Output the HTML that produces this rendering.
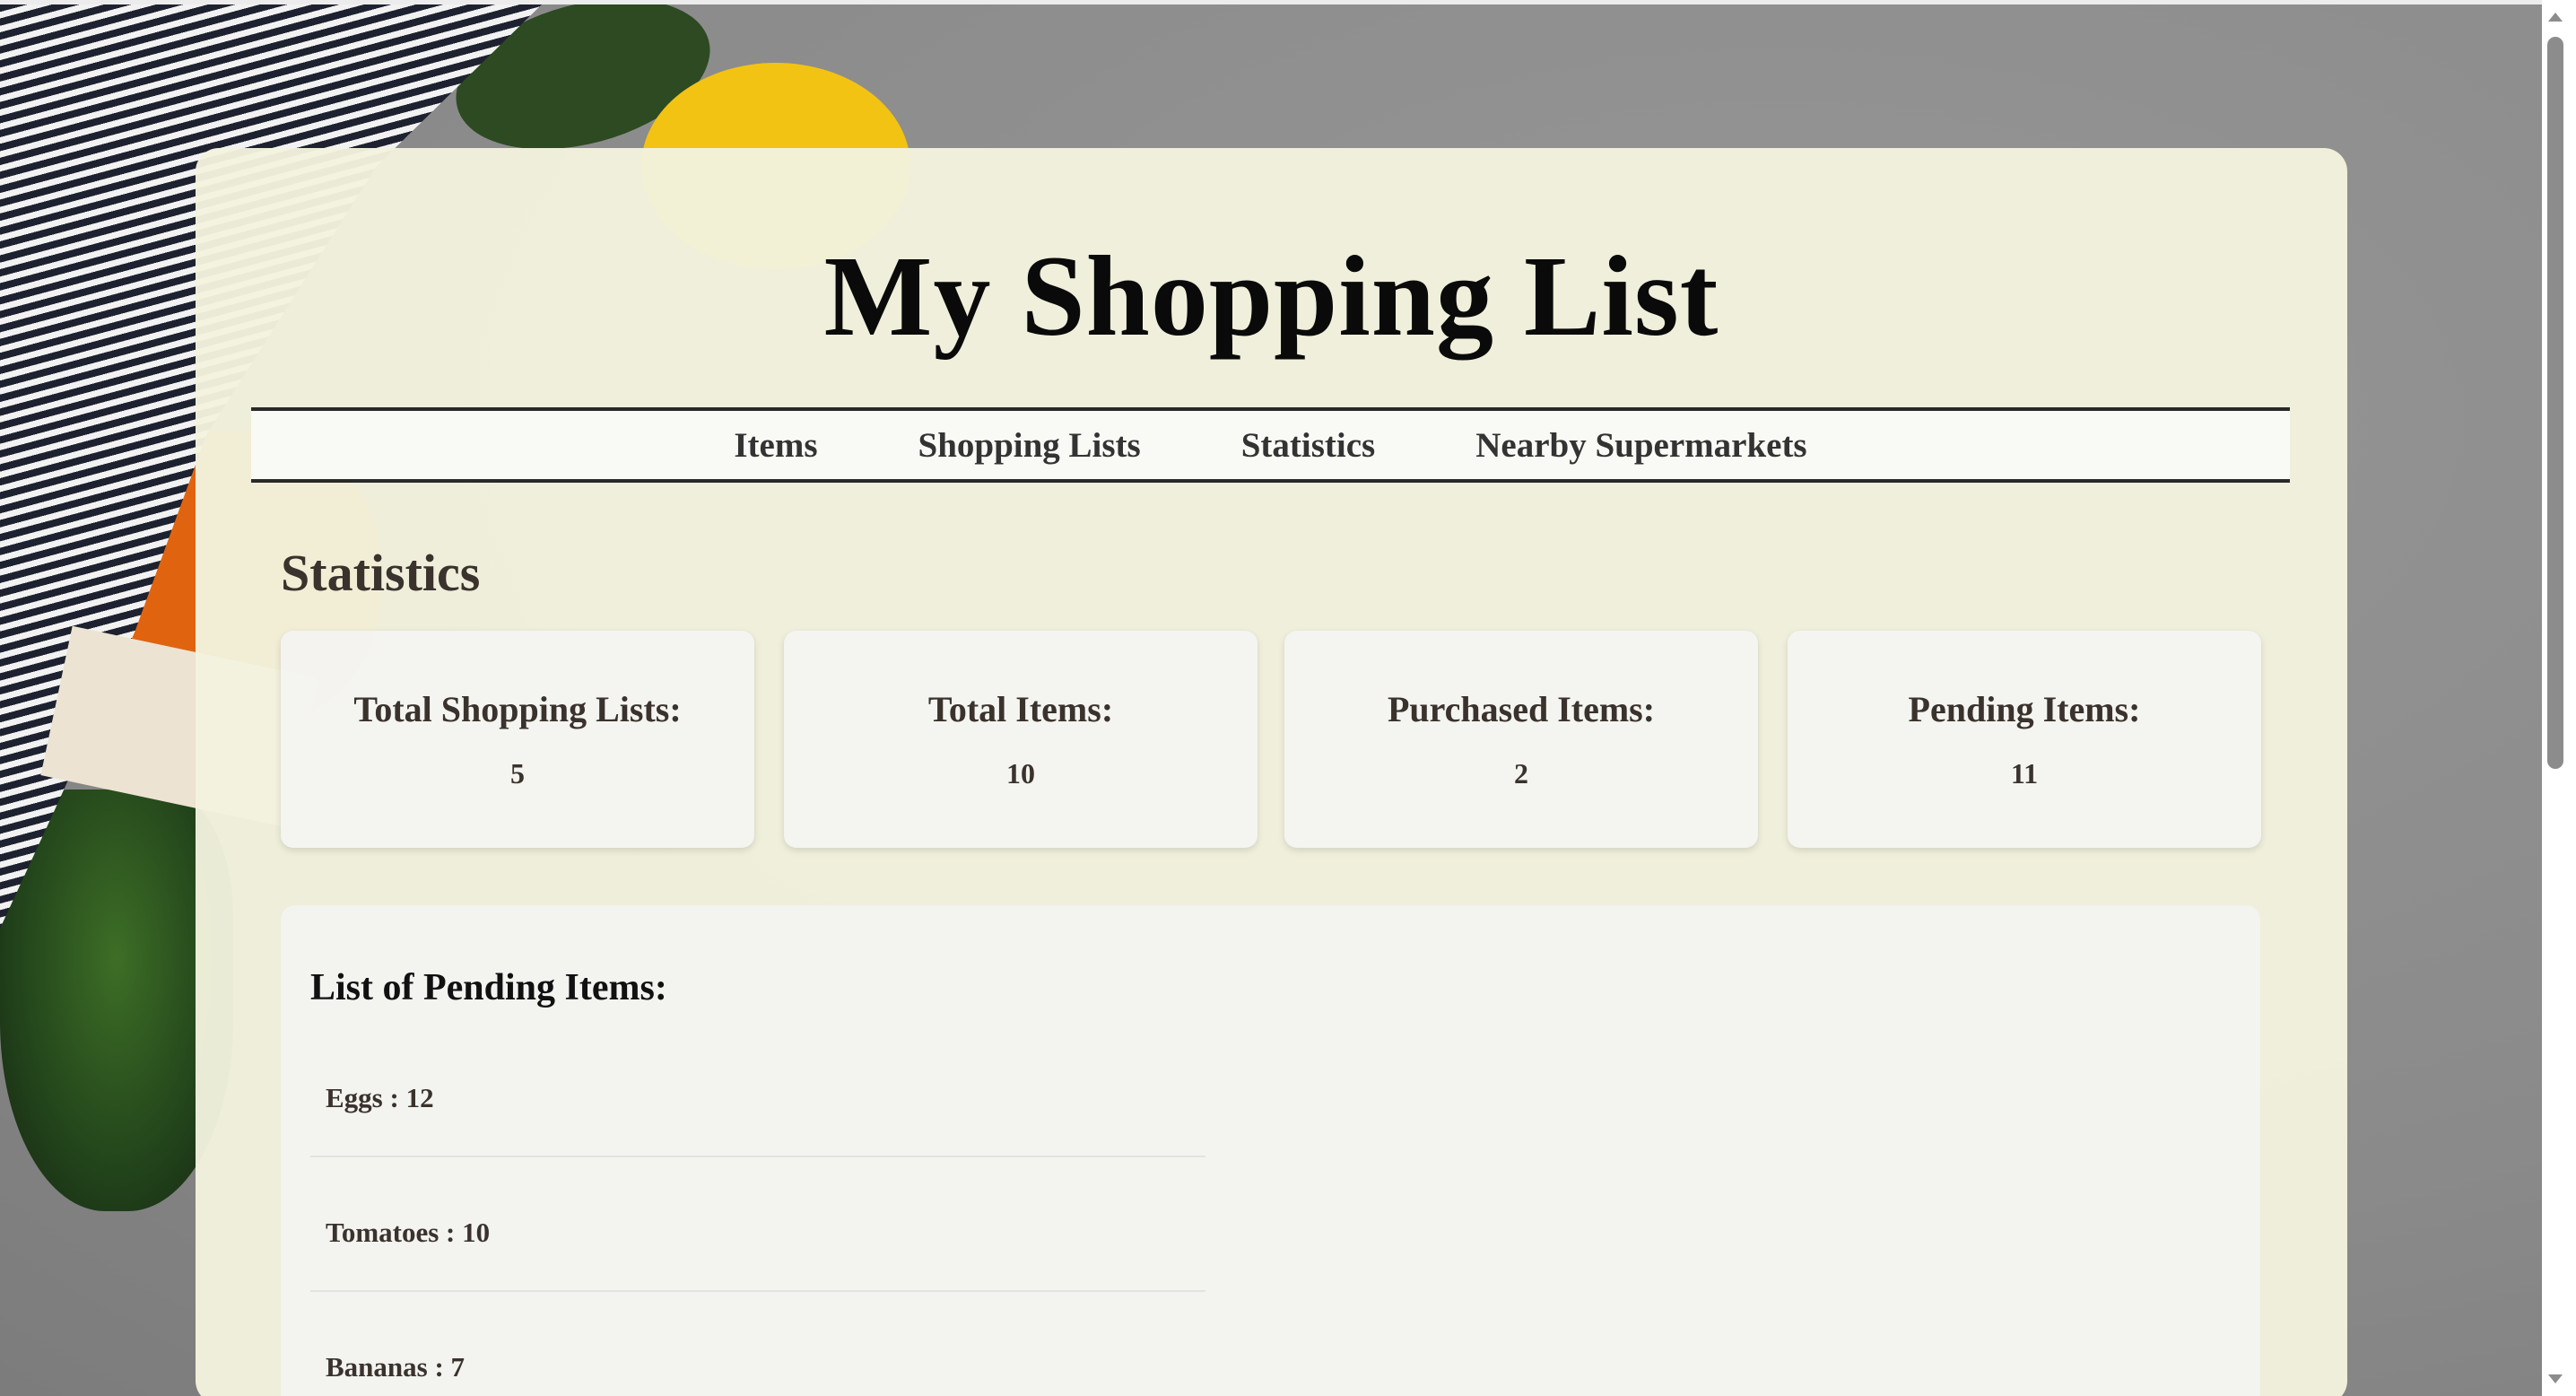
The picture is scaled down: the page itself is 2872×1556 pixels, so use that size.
<!DOCTYPE html>
<html><head><meta charset="utf-8"><style>
*{margin:0;padding:0;box-sizing:border-box}
html,body{width:2872px;height:1556px;overflow:hidden}
body{position:relative;font-family:"Liberation Serif",serif;background:#8e8e8e}
.bg{position:absolute;left:0;top:5px;width:2834px;height:1551px;background:
radial-gradient(ellipse at 70% 30%,#969696,#8a8a8a 60%,#7c7c7c);}
.stripes{position:absolute;left:0;top:5px;width:640px;height:1040px;
clip-path:polygon(0 0,604px 0,420px 180px,230px 480px,150px 700px,60px 900px,0 1030px);
background:repeating-linear-gradient(165deg,#1e2230 0 8px,#f2f2f2 8px 15px)}
.cuc{position:absolute;left:505px;top:5px;width:290px;height:155px;border-radius:50%;background:#2d4a22;transform:rotate(-15deg)}
.lemon{position:absolute;left:715px;top:70px;width:300px;height:230px;border-radius:50%;background:#f2c313}
.orange{position:absolute;left:105px;top:480px;width:320px;height:330px;border-radius:45%;background:#e0640f}
.rope{position:absolute;left:60px;top:725px;width:280px;height:170px;background:#ece3d2;transform:rotate(12deg)}
.herb{position:absolute;left:0;top:880px;width:260px;height:470px;background:radial-gradient(ellipse at 50% 40%,#3d6e26,#20401a 65%,#1a2a14 90%);border-radius:30% 30% 45% 45%}
.topstrip{position:absolute;left:0;top:0;width:2872px;height:5px;background:#ececec}
.sb{position:absolute;left:2834px;top:0;width:38px;height:1556px;background:#fff}
.thumb{position:absolute;left:2840px;top:41px;width:18px;height:816px;border-radius:9px;background:#8c8c8c}
.up{position:absolute;left:2841px;top:14px;border-left:8px solid transparent;border-right:8px solid transparent;border-bottom:10px solid #8c8c8c}
.dn{position:absolute;left:2841px;top:1532px;border-left:8px solid transparent;border-right:8px solid transparent;border-top:10px solid #8c8c8c}
.card{position:absolute;left:218px;top:165px;width:2399px;height:1400px;background:rgba(243,243,222,0.96);border-radius:26px}
h1{position:absolute;left:0;width:2399px;top:92px;text-align:center;font-size:128px;font-weight:bold;color:#0a0a0a;letter-spacing:1px}
.nav{position:absolute;left:62px;top:289px;width:2273px;height:84px;border-top:4px solid #2a2a2a;border-bottom:4px solid #2a2a2a;background:rgba(250,250,250,0.85);display:flex;justify-content:center;align-items:center;gap:112px;font-size:39px;font-weight:bold;color:#333}
h2{position:absolute;left:95px;top:440px;font-size:58px;font-weight:bold;color:#3a322c}
.st{position:absolute;top:538px;width:528px;height:242px;background:rgba(243,243,241,0.95);border-radius:14px;box-shadow:0 3px 8px rgba(0,0,0,0.12);text-align:center;color:#3a322c;font-weight:bold}
.st .l{margin-top:64px;font-size:40px}
.st .v{margin-top:30px;font-size:32px}
.panel{position:absolute;left:95px;top:844px;width:2207px;height:600px;background:rgba(242,242,241,0.95);border-radius:16px}
.panel h3{position:absolute;left:33px;top:68px;font-size:42px;font-weight:bold;color:#111}
.it{position:absolute;left:33px;width:998px;height:150px;border-bottom:2px solid #e2e2e2;font-size:31px;font-weight:bold;color:#3a322c;padding-left:17px}
</style></head><body>
<div class="bg"></div>
<div class="cuc"></div><div class="lemon"></div><div class="orange"></div>
<div class="herb"></div><div class="stripes"></div><div class="rope"></div>
<div class="topstrip"></div>
<div class="card">
<h1>My Shopping List</h1>
<div class="nav"><span>Items</span><span>Shopping Lists</span><span>Statistics</span><span>Nearby Supermarkets</span></div>
<h2>Statistics</h2>
<div class="st" style="left:95px"><div class="l">Total Shopping Lists:</div><div class="v">5</div></div>
<div class="st" style="left:656px"><div class="l">Total Items:</div><div class="v">10</div></div>
<div class="st" style="left:1214px"><div class="l">Purchased Items:</div><div class="v">2</div></div>
<div class="st" style="left:1775px"><div class="l">Pending Items:</div><div class="v">11</div></div>
<div class="panel">
<h3>List of Pending Items:</h3>
<div class="it" style="top:131px;padding-top:66px">Eggs : 12</div>
<div class="it" style="top:281px;padding-top:66px">Tomatoes : 10</div>
<div class="it" style="top:431px;padding-top:66px">Bananas : 7</div>
</div>
</div>
<div class="sb"></div><div class="thumb"></div><div class="up"></div><div class="dn"></div>
</body></html>
